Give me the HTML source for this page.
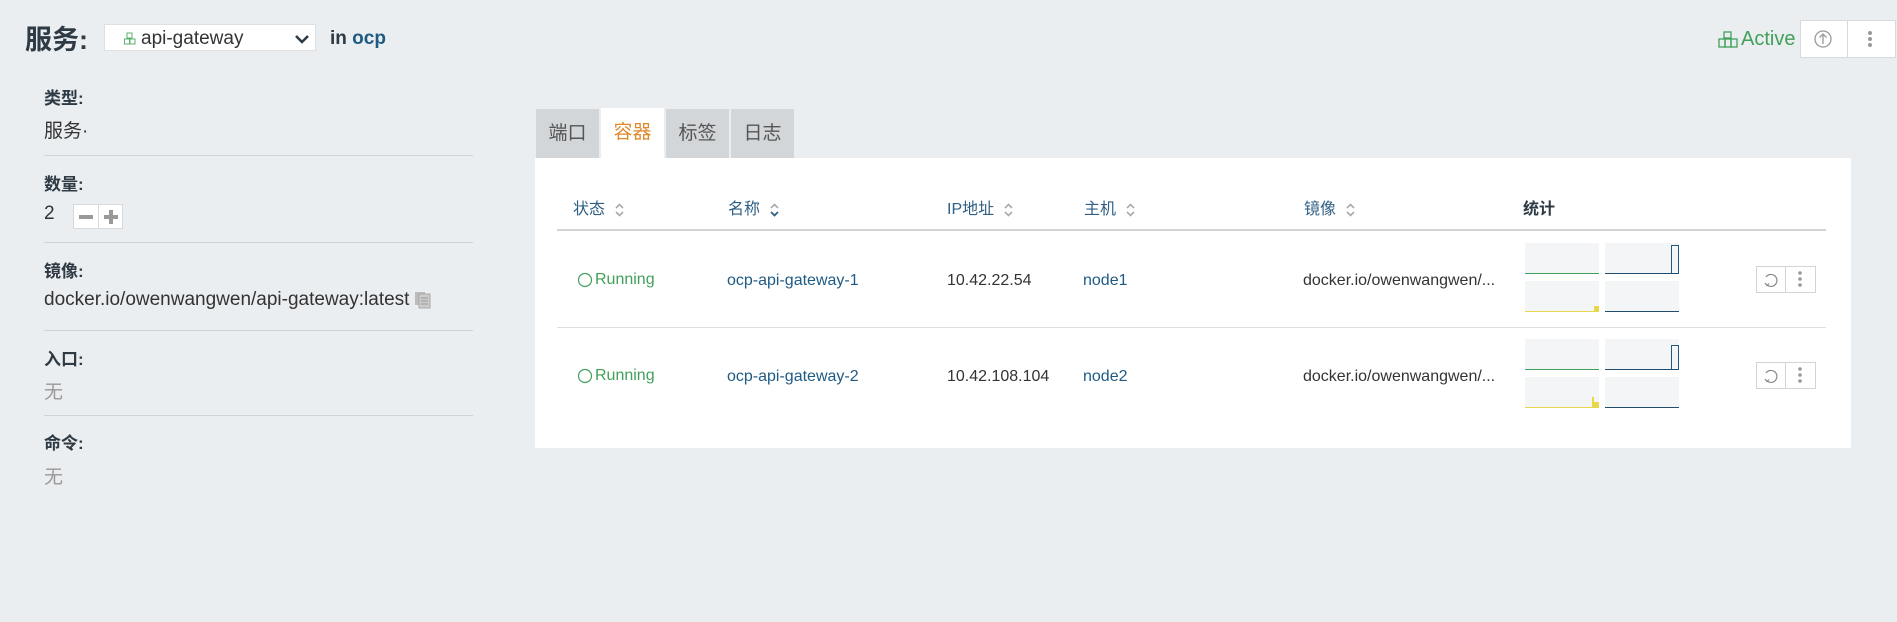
<!DOCTYPE html>
<html><head><meta charset="utf-8"><style>
*{box-sizing:border-box;margin:0;padding:0}
body{width:1897px;height:622px;background:#ebeef0;font-family:"Liberation Sans","Noto Sans CJK SC",sans-serif;color:#2e3a44;position:relative;overflow:hidden}
.a{position:absolute;white-space:nowrap}
.lbl{font-weight:bold;font-size:17px;color:#2e3a44}
.val{font-size:19px;color:#333}
.hr{position:absolute;left:44px;width:429px;height:1px;background:#cfd3d6}
.th{font-size:16px;color:#2f5f84}
.td{font-size:16px;color:#333}
.lnk{color:#1f5a85}
.box{position:absolute;width:74px;height:31px;background:#f3f5f7}
.sort{display:inline-block;vertical-align:middle;margin-left:10px}
.tab{position:absolute;top:109px;height:49px;width:63px;background:#d2d6d9;font-size:19px;color:#555;text-align:center;line-height:50px}
</style></head><body>
<div class="a" style="left:25px;top:18px;font-size:27px;font-weight:bold;color:#2e3a44">服务:</div>
<div class="a" style="left:104px;top:24px;width:212px;height:27px;background:#fff;border:1px solid #dde1e3"></div>
<svg class="a" style="left:123px;top:32px" width="14" height="14" viewBox="0 0 14 14" fill="none" stroke="#5cb072" stroke-width="1"><rect x="4" y="1" width="5" height="5"/><rect x="1.5" y="7" width="5" height="5"/><rect x="7" y="7" width="5" height="5"/></svg>
<div class="a" style="left:141px;top:28px;font-size:19px;color:#333">api-gateway</div>
<svg class="a" style="left:294px;top:33px" width="16" height="12" viewBox="0 0 16 12"><path d="M2 3l6 6 6-6" stroke="#2e3a44" stroke-width="2.5" fill="none"/></svg>
<div class="a" style="left:330px;top:28px;font-size:19px;font-weight:bold">in <span style="color:#1f5a85">ocp</span></div>

<svg class="a" style="left:1718px;top:31px" width="20" height="18" viewBox="0 0 20 18" fill="none" stroke="#41a05a" stroke-width="1.3"><rect x="6" y="1" width="7" height="6"/><rect x="1" y="8" width="6" height="8"/><rect x="7" y="8" width="6" height="8"/><rect x="13" y="8" width="6" height="8"/></svg>
<div class="a" style="left:1741px;top:28px;font-size:20px;color:#41a05a">Active</div>
<div class="a" style="left:1800px;top:20px;width:96px;height:38px;background:#fff;border:1px solid #d6dadc"></div>
<div class="a" style="left:1847px;top:20px;width:1px;height:38px;background:#d6dadc"></div>
<svg class="a" style="left:1812px;top:28px" width="22" height="22" viewBox="0 0 22 22" fill="none" stroke="#999" stroke-width="1.3"><circle cx="11" cy="11" r="8"/><path d="M11 16V6M7.5 9.5L11 6l3.5 3.5"/></svg>
<svg class="a" style="left:1866px;top:29px" width="8" height="20"><circle cx="4" cy="4" r="2" fill="#999"/><circle cx="4" cy="10" r="2" fill="#999"/><circle cx="4" cy="16" r="2" fill="#999"/></svg>

<div class="a lbl" style="left:44px;top:84px">类型:</div>
<div class="a val" style="left:44px;top:116px">服务·</div>
<div class="hr" style="top:155px"></div>
<div class="a lbl" style="left:44px;top:170px">数量:</div>
<div class="a val" style="left:44px;top:203px">2</div>
<div class="a" style="left:73px;top:204px;width:50px;height:25px;background:#fff;border:1px solid #d6dadc"></div>
<div class="a" style="left:98px;top:204px;width:1px;height:25px;background:#d6dadc"></div>
<div class="a" style="left:79px;top:215px;width:14px;height:4px;background:#999"></div>
<div class="a" style="left:104px;top:215px;width:14px;height:4px;background:#999"></div>
<div class="a" style="left:109px;top:210px;width:4px;height:14px;background:#999"></div>
<div class="hr" style="top:242px"></div>
<div class="a lbl" style="left:44px;top:257px">镜像:</div>
<div class="a val" style="left:44px;top:289px">docker.io/owenwangwen/api-gateway:latest<svg style="margin-left:5px;vertical-align:-4px" width="18" height="20" viewBox="0 0 18 20"><rect x="1" y="3" width="10" height="13" fill="#bbb"/><rect x="5" y="5" width="11" height="14" fill="#ccc" stroke="#aaa"/><path d="M7 9h7M7 12h7M7 15h7" stroke="#999"/></svg></div>
<div class="hr" style="top:330px"></div>
<div class="a lbl" style="left:44px;top:345px">入口:</div>
<div class="a val" style="left:44px;top:377px;color:#999">无</div>
<div class="hr" style="top:415px"></div>
<div class="a lbl" style="left:44px;top:429px">命令:</div>
<div class="a val" style="left:44px;top:462px;color:#999">无</div>

<div class="tab" style="left:536px">端口</div>
<div class="tab" style="left:601px;top:108px;height:51px;background:#fff;color:#e08a2c">容器</div>
<div class="tab" style="left:666px">标签</div>
<div class="tab" style="left:731px">日志</div>
<div class="a" style="left:535px;top:158px;width:1316px;height:290px;background:#fff"></div>

<div class="a th" style="left:573px;top:195px">状态<svg class="sort" width="9" height="14"><path d="M1 5l3.5-3.5L8 5M1 9l3.5 3.5L8 9" stroke="#aaa" stroke-width="1.6" fill="none"/></svg></div>
<div class="a th" style="left:728px;top:195px">名称<svg class="sort" width="9" height="14"><path d="M1 5l3.5-3.5L8 5" stroke="#aaa" stroke-width="1.6" fill="none"/><path d="M1 9l3.5 3.5L8 9" stroke="#2f5f84" stroke-width="1.8" fill="none"/></svg></div>
<div class="a th" style="left:947px;top:195px">IP地址<svg class="sort" width="9" height="14"><path d="M1 5l3.5-3.5L8 5M1 9l3.5 3.5L8 9" stroke="#aaa" stroke-width="1.6" fill="none"/></svg></div>
<div class="a th" style="left:1084px;top:195px">主机<svg class="sort" width="9" height="14"><path d="M1 5l3.5-3.5L8 5M1 9l3.5 3.5L8 9" stroke="#aaa" stroke-width="1.6" fill="none"/></svg></div>
<div class="a th" style="left:1304px;top:195px">镜像<svg class="sort" width="9" height="14"><path d="M1 5l3.5-3.5L8 5M1 9l3.5 3.5L8 9" stroke="#aaa" stroke-width="1.6" fill="none"/></svg></div>
<div class="a" style="left:1523px;top:195px;font-size:16px;font-weight:bold;color:#2e3a44">统计</div>
<div class="a" style="left:557px;top:229px;width:1269px;height:2px;background:#d3d3d3"></div>
<div class="a" style="left:557px;top:327px;width:1269px;height:1px;background:#dedede"></div>

<svg class="a" style="left:577px;top:272px" width="16" height="16"><circle cx="8" cy="8" r="6.5" stroke="#41a05a" stroke-width="1.2" fill="none"/></svg>
<div class="a td" style="left:595px;top:271px;color:#41a05a">Running</div>
<div class="a td lnk" style="left:727px;top:272px">ocp-api-gateway-1</div>
<div class="a td" style="left:947px;top:272px">10.42.22.54</div>
<div class="a td lnk" style="left:1083px;top:272px">node1</div>
<div class="a td" style="left:1303px;top:272px">docker.io/owenwangwen/...</div>
<svg class="a" style="left:577px;top:368px" width="16" height="16"><circle cx="8" cy="8" r="6.5" stroke="#41a05a" stroke-width="1.2" fill="none"/></svg>
<div class="a td" style="left:595px;top:367px;color:#41a05a">Running</div>
<div class="a td lnk" style="left:727px;top:368px">ocp-api-gateway-2</div>
<div class="a td" style="left:947px;top:368px">10.42.108.104</div>
<div class="a td lnk" style="left:1083px;top:368px">node2</div>
<div class="a td" style="left:1303px;top:368px">docker.io/owenwangwen/...</div>

<div class="box" style="left:1525px;top:243px;border-bottom:1px solid #41a05a"></div>
<div class="box" style="left:1605px;top:243px;border-bottom:1px solid #1f4e70"></div>
<div class="a" style="left:1671px;top:245px;width:8px;height:29px;border:1.5px solid #1f5a85;border-bottom:none"></div>
<div class="box" style="left:1525px;top:281px;border-bottom:1px solid #e6d84a"></div>
<div class="a" style="left:1594px;top:306px;width:5px;height:5px;background:#e6d84a"></div>
<div class="box" style="left:1605px;top:281px;border-bottom:1px solid #1f4e70"></div>
<div class="box" style="left:1525px;top:339px;border-bottom:1px solid #41a05a"></div>
<div class="box" style="left:1605px;top:339px;border-bottom:1px solid #1f4e70"></div>
<div class="a" style="left:1671px;top:345px;width:8px;height:25px;border:1.5px solid #1f5a85;border-bottom:none"></div>
<div class="box" style="left:1525px;top:377px;border-bottom:1px solid #e6d84a"></div>
<div class="a" style="left:1592px;top:397px;width:2px;height:10px;background:#e6d84a"></div>
<div class="a" style="left:1594px;top:402px;width:5px;height:5px;background:#e6d84a"></div>
<div class="box" style="left:1605px;top:377px;border-bottom:1px solid #1f4e70"></div>

<div class="a" style="left:1756px;top:266px;width:60px;height:27px;background:#fff;border:1px solid #d0d4d6"></div>
<div class="a" style="left:1785px;top:266px;width:1px;height:27px;background:#d0d4d6"></div>
<svg class="a" style="left:1762px;top:271px" width="18" height="18" viewBox="0 0 18 18"><path d="M5 14A6 6 0 1 0 4 6" stroke="#888" stroke-width="1.2" fill="none"/><path d="M3 12l2 2.5 2-2" stroke="#888" stroke-width="1.2" fill="none"/></svg>
<svg class="a" style="left:1797px;top:270px" width="6" height="18"><circle cx="3" cy="3" r="1.8" fill="#999"/><circle cx="3" cy="9" r="1.8" fill="#999"/><circle cx="3" cy="15" r="1.8" fill="#999"/></svg>
<div class="a" style="left:1756px;top:362px;width:60px;height:27px;background:#fff;border:1px solid #d0d4d6"></div>
<div class="a" style="left:1785px;top:362px;width:1px;height:27px;background:#d0d4d6"></div>
<svg class="a" style="left:1762px;top:367px" width="18" height="18" viewBox="0 0 18 18"><path d="M5 14A6 6 0 1 0 4 6" stroke="#888" stroke-width="1.2" fill="none"/><path d="M3 12l2 2.5 2-2" stroke="#888" stroke-width="1.2" fill="none"/></svg>
<svg class="a" style="left:1797px;top:366px" width="6" height="18"><circle cx="3" cy="3" r="1.8" fill="#999"/><circle cx="3" cy="9" r="1.8" fill="#999"/><circle cx="3" cy="15" r="1.8" fill="#999"/></svg>
</body></html>
